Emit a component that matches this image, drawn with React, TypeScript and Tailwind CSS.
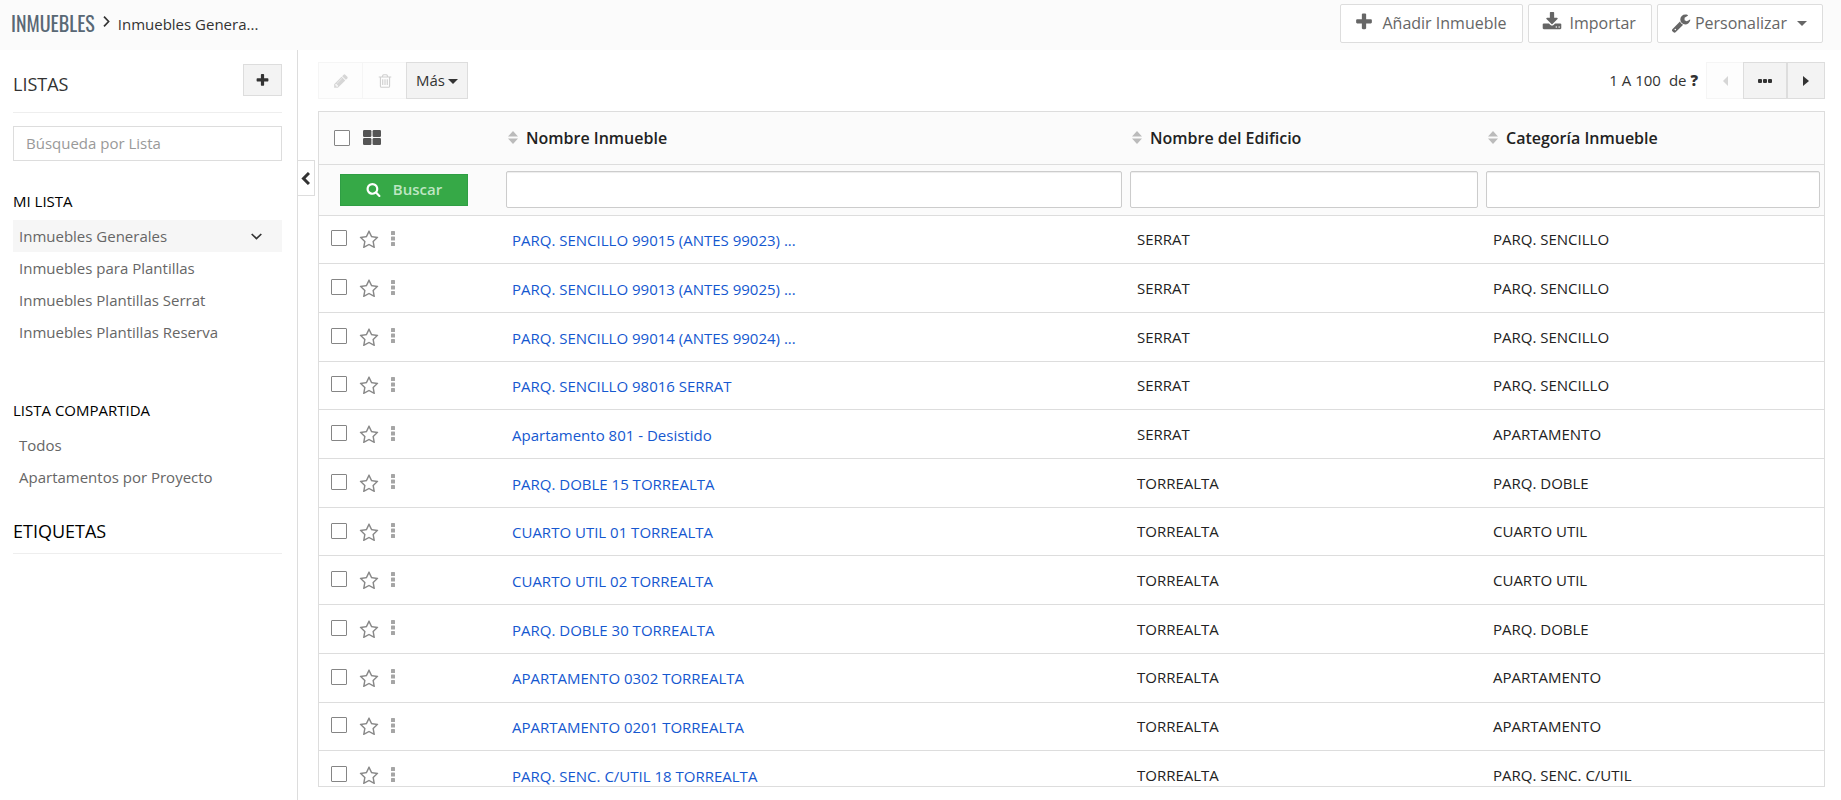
import type { ReactNode } from "react";

const icons = {
  plus: "M1600 736v192q0 40-28 68t-68 28h-416v416q0 40-28 68t-68 28h-192q-40 0-68-28t-28-68v-416h-416q-40 0-68-28t-28-68v-192q0-40 28-68t68-28h416v-416q0-40 28-68t68-28h192q40 0 68 28t28 68v416h416q40 0 68 28t28 68z",
  pencil:
    "M491 1536l91-91-235-235-91 91v107h128v128h107zm523-928q0-22-22-22-10 0-17 7l-542 542q-7 7-7 17 0 22 22 22 10 0 17-7l542-542q7-7 7-17zm-54-192l416 416-832 832h-416v-416zm683 96q0 53-37 90l-166 166-416-416 166-165q36-38 90-38 53 0 91 38l235 234q37 39 37 91z",
  trash:
    "M704 736v576q0 14-9 23t-23 9h-64q-14 0-23-9t-9-23v-576q0-14 9-23t23-9h64q14 0 23 9t9 23zm256 0v576q0 14-9 23t-23 9h-64q-14 0-23-9t-9-23v-576q0-14 9-23t23-9h64q14 0 23 9t9 23zm256 0v576q0 14-9 23t-23 9h-64q-14 0-23-9t-9-23v-576q0-14 9-23t23-9h64q14 0 23 9t9 23zm128 724v-948h-896v948q0 22 7 40.5t14.5 27 10.5 8.5h832q3 0 10.5-8.5t14.5-27 7-40.5zm-672-1076h448l-48-117q-7-9-17-11h-317q-10 2-17 11zm928 32v64q0 14-9 23t-23 9h-96v948q0 83-47 143.5t-113 60.5h-832q-66 0-113-58.5t-47-141.5v-952h-96q-14 0-23-9t-9-23v-64q0-14 9-23t23-9h309l70-167q15-37 54-63t79-26h320q40 0 79 26t54 63l70 167h309q14 0 23 9t9 23z",
  search:
    "M1216 832q0-185-131.5-316.5t-316.5-131.5-316.5 131.5-131.5 316.5 131.5 316.5 316.5 131.5 316.5-131.5 131.5-316.5zm512 832q0 52-38 90t-90 38q-54 0-90-38l-343-342q-179 124-399 124-143 0-273.5-55.5t-225-150-150-225-55.5-273.5 55.5-273.5 150-225 225-150 273.5-55.5 273.5 55.5 225 150 150 225 55.5 273.5q0 220-124 399l343 343q37 37 37 90z",
  star: "M1201 1004l306-297-422-62-189-382-189 382-422 62 306 297-73 421 378-199 377 199zm527-357q0 22-26 48l-363 354 86 500q1 7 1 20 0 50-41 50-19 0-40-12l-449-236-449 236q-22 12-40 12-21 0-31.5-14.5t-10.5-35.5q0-6 2-20l86-500-364-354q-25-27-25-48 0-37 56-46l502-73 225-455q19-41 49-41t49 41l225 455 502 73q56 9 56 46z",
  wrench:
    "M448 1472q0-26-19-45t-45-19-45 19-19 45 19 45 45 19 45-19 19-45zm644-420l-682 682q-37 37-90 37-52 0-91-37l-106-108q-38-36-38-90 0-53 38-91l681-681q39 98 114.5 173.5t173.5 114.5zm634-435q0 39-23 106-47 134-164.5 217.5t-258.5 83.5q-185 0-316.5-131.5t-131.5-316.5 131.5-316.5 316.5-131.5q58 0 121.5 16.5t107.5 46.5q16 11 16 28t-16 28l-293 169v224l193 107q5-3 79-48.5t135.5-81 70.5-35.5q15 0 23.5 10t8.5 25z",
  download:
    "M1344 1344q0-26-19-45t-45-19-45 19-19 45 19 45 45 19 45-19 19-45zm256 0q0-26-19-45t-45-19-45 19-19 45 19 45 45 19 45-19 19-45zm128-224v320q0 40-28 68t-68 28h-1472q-40 0-68-28t-28-68v-320q0-40 28-68t68-28h465l135 136q58 56 136 56t136-56l136-136h464q40 0 68 28t28 68zm-325-569q17 41-14 70l-448 448q-18 19-45 19t-45-19l-448-448q-31-29-14-70 17-39 59-39h256v-448q0-26 19-45t45-19h256q26 0 45 19t19 45v448h256q42 0 59 39z",
};

const rows = [
  ["PARQ. SENCILLO 99015 (ANTES 99023) ...", "SERRAT", "PARQ. SENCILLO"],
  ["PARQ. SENCILLO 99013 (ANTES 99025) ...", "SERRAT", "PARQ. SENCILLO"],
  ["PARQ. SENCILLO 99014 (ANTES 99024) ...", "SERRAT", "PARQ. SENCILLO"],
  ["PARQ. SENCILLO 98016 SERRAT", "SERRAT", "PARQ. SENCILLO"],
  ["Apartamento 801 - Desistido", "SERRAT", "APARTAMENTO"],
  ["PARQ. DOBLE 15 TORREALTA", "TORREALTA", "PARQ. DOBLE"],
  ["CUARTO UTIL 01 TORREALTA", "TORREALTA", "CUARTO UTIL"],
  ["CUARTO UTIL 02 TORREALTA", "TORREALTA", "CUARTO UTIL"],
  ["PARQ. DOBLE 30 TORREALTA", "TORREALTA", "PARQ. DOBLE"],
  ["APARTAMENTO 0302 TORREALTA", "TORREALTA", "APARTAMENTO"],
  ["APARTAMENTO 0201 TORREALTA", "TORREALTA", "APARTAMENTO"],
  ["PARQ. SENC. C/UTIL 18 TORREALTA", "TORREALTA", "PARQ. SENC. C/UTIL"],
];

const columns = ["Nombre Inmueble", "Nombre del Edificio", "Categoría Inmueble"];

function Icon({ name, className }: { name: keyof typeof icons; className: string }) {
  return (
    <svg viewBox="0 0 1792 1792" fill="currentColor" aria-hidden="true" className={className}>
      <path d={icons[name]} />
    </svg>
  );
}

function Caret() {
  return (
    <svg viewBox="0 0 10 5" fill="currentColor" aria-hidden="true" className="mt-0.5 h-[5px] w-[10px]">
      <path d="M0 0h10L5 5z" />
    </svg>
  );
}

function HeaderButton({ children }: { children: ReactNode }) {
  return (
    <button
      type="button"
      className="flex h-[39px] items-center rounded-xs border border-[#ddd] bg-white pr-[15px] pl-[13px] pb-0.5 text-base text-[#666]"
    >
      {children}
    </button>
  );
}

function Header() {
  return (
    <header className="flex h-[50px] shrink-0 items-start justify-between bg-[#fbfbfb] pt-1 pr-[18px] pl-[11px]">
      <div className="flex h-[39px] items-center">
        <h1 className="font-['Oswald','Noto_Sans_ExtraCondensed','Open_Sans_Condensed','Liberation_Sans_Narrow',sans-serif] text-[20px] leading-[39px] text-[#596875]">
          <a href="#">INMUEBLES</a>
        </h1>
        <svg viewBox="0 0 7 11" fill="none" stroke="#333" strokeWidth="1.7" aria-hidden="true" className="mr-2 mb-1 ml-2 h-[11px] w-[7px]">
          <path d="M1 0.7L5.6 5.5L1 10.3" />
        </svg>
        <a href="#" className="pt-0.5 text-[15px] text-[#333]">
          Inmuebles Genera...
        </a>
      </div>
      <div className="flex gap-[5px]">
        <HeaderButton>
          <Icon name="plus" className="mr-2 mb-0.5 size-5" />
          Añadir Inmueble
        </HeaderButton>
        <HeaderButton>
          <Icon name="download" className="mr-2 mb-0.5 size-5" />
          Importar
        </HeaderButton>
        <HeaderButton>
          <Icon name="wrench" className="mr-1 size-5" />
          <span className="mr-2.5">Personalizar</span>
          <Caret />
        </HeaderButton>
      </div>
    </header>
  );
}

function ListLink({ children }: { children: ReactNode }) {
  return (
    <li>
      <a href="#" className="block px-1.5 leading-8 text-[#666]">
        {children}
      </a>
    </li>
  );
}

function Sidebar() {
  return (
    <aside className="w-[298px] shrink-0 border-r border-[#ddd] pt-3.5 pr-[15px] pl-[13px] text-[15px]">
      <div className="flex h-[49px] items-start justify-between border-b border-[#eee]">
        <h2 className="text-lg leading-10 text-[#333]">LISTAS</h2>
        <button
          type="button"
          aria-label="Añadir lista"
          className="flex h-8 w-[39px] items-center justify-center border border-[#ddd] bg-[#f3f3f3] text-[#333]"
        >
          <Icon name="plus" className="size-[15px]" />
        </button>
      </div>
      <input
        type="text"
        aria-label="Búsqueda por Lista"
        placeholder="Búsqueda por Lista"
        className="mt-[13px] block h-[35px] w-full border border-[#ddd] bg-white px-3 pb-0.5 placeholder:text-[#999]"
      />
      <h3 className="mt-[30px] leading-5 text-black">MI LISTA</h3>
      <ul className="mt-[9px]">
        <li className="flex items-center justify-between bg-[#f6f6f6] pr-5 pl-1.5">
          <a href="#" className="leading-8 text-[#666]">
            Inmuebles Generales
          </a>
          <button type="button" aria-label="Opciones de la lista" className="text-[#333]">
            <svg viewBox="0 0 11 7" fill="none" stroke="currentColor" strokeWidth="1.7" aria-hidden="true" className="h-[7px] w-[11px]">
              <path d="M0.7 1L5.5 5.6L10.3 1" />
            </svg>
          </button>
        </li>
        <ListLink>Inmuebles para Plantillas</ListLink>
        <ListLink>Inmuebles Plantillas Serrat</ListLink>
        <ListLink>Inmuebles Plantillas Reserva</ListLink>
      </ul>
      <h3 className="mt-[52px] leading-5 text-black">LISTA COMPARTIDA</h3>
      <ul className="mt-[9px]">
        <ListLink>Todos</ListLink>
        <ListLink>Apartamentos por Proyecto</ListLink>
      </ul>
      <h2 className="mt-6 border-b border-[#eee] pb-2 text-lg text-black">ETIQUETAS</h2>
    </aside>
  );
}

function Toolbar() {
  return (
    <div className="flex h-[37px] shrink-0 justify-between text-[15px] text-[#333]">
      <div className="flex">
        <button
          type="button"
          disabled
          aria-label="Editar"
          className="flex w-11 items-center justify-center border border-r-0 border-[#f5f5f5] bg-[#fdfdfd] text-[#d6d6d6]"
        >
          <Icon name="pencil" className="size-4" />
        </button>
        <button
          type="button"
          disabled
          aria-label="Eliminar"
          className="flex w-11 items-center justify-center border border-r-0 border-[#f5f5f5] bg-[#fdfdfd] text-[#d0d0d0]"
        >
          <Icon name="trash" className="size-4" />
        </button>
        <button type="button" className="flex items-center gap-[3px] border border-[#ddd] bg-[#f3f3f3] px-[9px]">
          Más
          <Caret />
        </button>
      </div>
      <div className="flex items-center">
        <span className="mr-2">1 A 100</span>
        <span className="mr-2">
          de <b className="font-extrabold">?</b>
        </span>
        <button
          type="button"
          disabled
          aria-label="Anterior"
          className="flex h-full w-[37px] items-center justify-center border border-r-0 border-[#f5f5f5] bg-[#fdfdfd] text-[#d6d6d6]"
        >
          <svg viewBox="0 0 5 10" fill="currentColor" aria-hidden="true" className="h-2.5 w-[5px]">
            <path d="M5 0v10L0 5z" />
          </svg>
        </button>
        <button
          type="button"
          aria-label="Ir a la página"
          className="flex h-full w-11 items-center justify-center border border-[#ddd] bg-[#f3f3f3]"
        >
          <svg viewBox="0 0 14 4" fill="currentColor" aria-hidden="true" className="h-1 w-3.5">
            <rect width="4" height="4" rx="1" />
            <rect x="5" width="4" height="4" rx="1" />
            <rect x="10" width="4" height="4" rx="1" />
          </svg>
        </button>
        <button
          type="button"
          aria-label="Siguiente"
          className="flex h-full w-[38px] items-center justify-center border border-[#ddd] bg-[#f3f3f3]"
        >
          <svg viewBox="0 0 6 10" fill="currentColor" aria-hidden="true" className="h-2.5 w-1.5">
            <path d="M0 0v10l6-5z" />
          </svg>
        </button>
      </div>
    </div>
  );
}

function Checkbox({ label }: { label: string }) {
  return (
    <input
      type="checkbox"
      aria-label={label}
      className="size-4 appearance-none rounded-[1px] border border-[#858585] bg-white checked:bg-[#1558d0]"
    />
  );
}

function RecordsTable() {
  return (
    <div className="min-h-0 flex-1 overflow-hidden border border-[#ddd]">
      <table className="h-[688px] w-full table-fixed border-collapse text-left text-[15px] text-[#222]">
        <colgroup>
          <col className="w-[183px]" />
          <col />
          <col className="w-[356px]" />
          <col className="w-[342px]" />
        </colgroup>
        <thead className="bg-[#fbfbfb]">
          <tr className="h-[52px] border-b border-[#ddd]">
            <th>
              <div className="flex items-center gap-[13px] pl-[15px]">
                <Checkbox label="Seleccionar todos" />
                <button type="button" aria-label="Configurar columnas" className="text-[#555]">
                  <svg viewBox="0 0 18 15" fill="currentColor" aria-hidden="true" className="h-[15px] w-[18px]">
                    <rect width="8.4" height="7" rx="1.2" />
                    <rect x="9.6" width="8.4" height="7" rx="1.2" />
                    <rect y="8" width="8.4" height="7" rx="1.2" />
                    <rect x="9.6" y="8" width="8.4" height="7" rx="1.2" />
                  </svg>
                </button>
              </div>
            </th>
            {columns.map((column) => (
              <th key={column} className="text-base font-semibold">
                <a href="#" className="flex items-center gap-2 pl-1.5">
                  <svg viewBox="0 0 10 13" fill="#bbb" aria-hidden="true" className="h-[13px] w-2.5">
                    <path d="M5 0l5 5.5H0zM0 7.5h10L5 13z" />
                  </svg>
                  {column}
                </a>
              </th>
            ))}
          </tr>
          <tr className="h-[51px] border-b border-[#ddd]">
            <td className="pl-[21px]">
              <button
                type="button"
                className="flex h-8 w-32 items-center justify-center gap-3 border border-[#2f9e44] bg-[#36a947] font-semibold text-[#bfe6c3]"
              >
                <Icon name="search" className="size-[15px] text-white" />
                Buscar
              </button>
            </td>
            {columns.map((column) => (
              <td key={column} className="px-1">
                <input
                  type="text"
                  aria-label={column}
                  className="block h-[37px] w-full rounded-xs border border-[#ccc] bg-white px-2 shadow-[inset_0_1px_1px_rgba(0,0,0,0.075)]"
                />
              </td>
            ))}
          </tr>
        </thead>
        <tbody>
          {rows.map(([name, building, category]) => (
            <tr key={name} className="border-b border-[#ddd]">
              <td>
                <div className="flex items-center pl-3">
                  <span className="flex pb-0.5">
                    <Checkbox label={name} />
                  </span>
                  <button type="button" aria-label="Seguir" className="ml-3 pt-0.5 text-[#888]">
                    <Icon name="star" className="size-5" />
                  </button>
                  <button type="button" aria-label="Más acciones" className="ml-3 pb-0.5 text-[#a5a5a5]">
                    <svg viewBox="0 0 4 15" fill="currentColor" aria-hidden="true" className="h-[15px] w-1">
                      <rect width="4" height="4" rx="0.6" />
                      <rect y="5.5" width="4" height="4" rx="0.6" />
                      <rect y="11" width="4" height="4" rx="0.6" />
                    </svg>
                  </button>
                </div>
              </td>
              <td className="truncate pt-0.5 pl-2.5">
                <a href="#" className="text-[#1558d0]">
                  {name}
                </a>
              </td>
              <td className="truncate pl-[11px]">{building}</td>
              <td className="truncate pl-[11px]">{category}</td>
            </tr>
          ))}
        </tbody>
      </table>
    </div>
  );
}

export default function App() {
  return (
    <div className="flex h-screen flex-col bg-white font-['Open_Sans',sans-serif]">
      <Header />
      <div className="flex min-h-0 flex-1">
        <Sidebar />
        <button
          type="button"
          aria-label="Ocultar panel"
          className="mt-[110px] flex h-9 w-[17px] shrink-0 items-center justify-center border border-l-0 border-[#ddd] bg-white pr-0.5 text-[#333]"
        >
          <svg viewBox="0 0 9 13" fill="none" stroke="currentColor" strokeWidth="3" aria-hidden="true" className="h-[13px] w-[9px]">
            <path d="M8 1L2.5 6.5L8 12" />
          </svg>
        </button>
        <main className="flex min-w-0 flex-1 flex-col gap-3 pt-3 pr-4 pb-[13px] pl-[3px]">
          <Toolbar />
          <RecordsTable />
        </main>
      </div>
    </div>
  );
}
